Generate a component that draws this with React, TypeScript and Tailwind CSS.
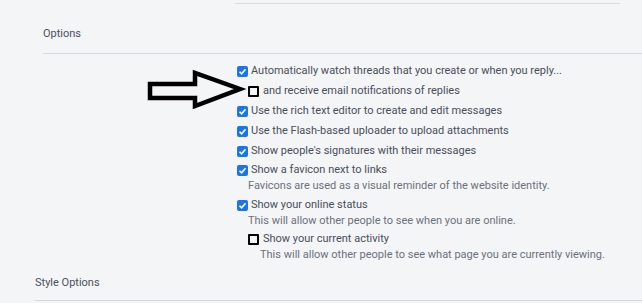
import React from "react"

type Opt = {
  label: string
  checked: boolean
  indent?: boolean
  h: string
}

function Box({ checked }: { checked: boolean }) {
  if (checked) {
    return (
      <span className="flex h-[11px] w-[11px] shrink-0 items-center justify-center rounded-[2px] bg-[#1a76e8]">
        <svg viewBox="0 0 12 12" className="h-[9px] w-[9px]">
          <path d="M2 6.3 L4.8 9 L10 3" fill="none" stroke="white" strokeWidth="2.2" />
        </svg>
      </span>
    )
  }
  return <span className="h-[11px] w-[11px] shrink-0 rounded-[1px] border-2 border-black" />
}

export default function App() {
  const opts: Opt[] = [
    { label: "Automatically watch threads that you create or when you reply...", checked: true, h: "h-[19px]" },
    { label: "and receive email notifications of replies", checked: false, indent: true, h: "h-[20px]" },
    { label: "Use the rich text editor to create and edit messages", checked: true, h: "h-[20px]" },
    { label: "Use the Flash-based uploader to upload attachments", checked: true, h: "h-[20px]" },
    { label: "Show people's signatures with their messages", checked: true, h: "h-[20px]" },
  ]

  return (
    <div className="relative h-[303px] w-[642px] overflow-hidden bg-[#f4f5f7] font-['Roboto',sans-serif] text-[11px] text-[#484e59]">
      <div className="ml-[235px] mt-[3px] h-px w-[385px] bg-[#d9dbdf]" />

      <div className="pl-[43px] pt-[22px] pb-[11px] leading-[16px] text-[#4a505c]">Options</div>
      <div className="ml-[43px] h-px bg-[#d6d9dd]" />

      <div className="flex flex-col pl-[237px] pt-[8px]">
        {opts.map((o) => (
          <div key={o.label} className={`flex items-center ${o.h} ${o.indent ? "pl-[11px]" : ""}`}>
            <Box checked={o.checked} />
            <span className={o.indent ? "ml-[4px]" : "ml-[3px]"}>{o.label}</span>
          </div>
        ))}

        <div className="flex h-[18px] items-center">
          <Box checked />
          <span className="ml-[3px]">Show a favicon next to links</span>
        </div>
        <div className="h-[14px] pl-[11px] leading-[14px] text-[#6b717b]">
          Favicons are used as a visual reminder of the website identity.
        </div>

        <div className="mt-[3px] flex h-[18px] items-center">
          <Box checked />
          <span className="ml-[3px]">Show your online status</span>
        </div>
        <div className="h-[14px] pl-[11px] leading-[14px] text-[#6b717b]">
          This will allow other people to see when you are online.
        </div>

        <div className="mt-[2px] flex h-[18px] items-center pl-[11px]">
          <Box checked={false} />
          <span className="ml-[4px]">Show your current activity</span>
        </div>
        <div className="h-[14px] pl-[23px] leading-[14px] text-[#6b717b]">
          This will allow other people to see what page you are currently viewing.
        </div>
      </div>

      <div className="pl-[35px] pt-[13px] pb-[9px] leading-[16px] text-[#4a505c]">Style Options</div>
      <div className="ml-[35px] h-px bg-[#d6d9dd]" />

      {/* annotation arrow pasted over the screenshot */}
      <svg className="absolute left-0 top-0" width="642" height="303">
        <polygon
          points="150,84 195,84 195,73 240,89 195,106 195,98 150,98"
          fill="none"
          stroke="black"
          strokeWidth="4.5"
          strokeLinejoin="miter"
        />
      </svg>
    </div>
  )
}
